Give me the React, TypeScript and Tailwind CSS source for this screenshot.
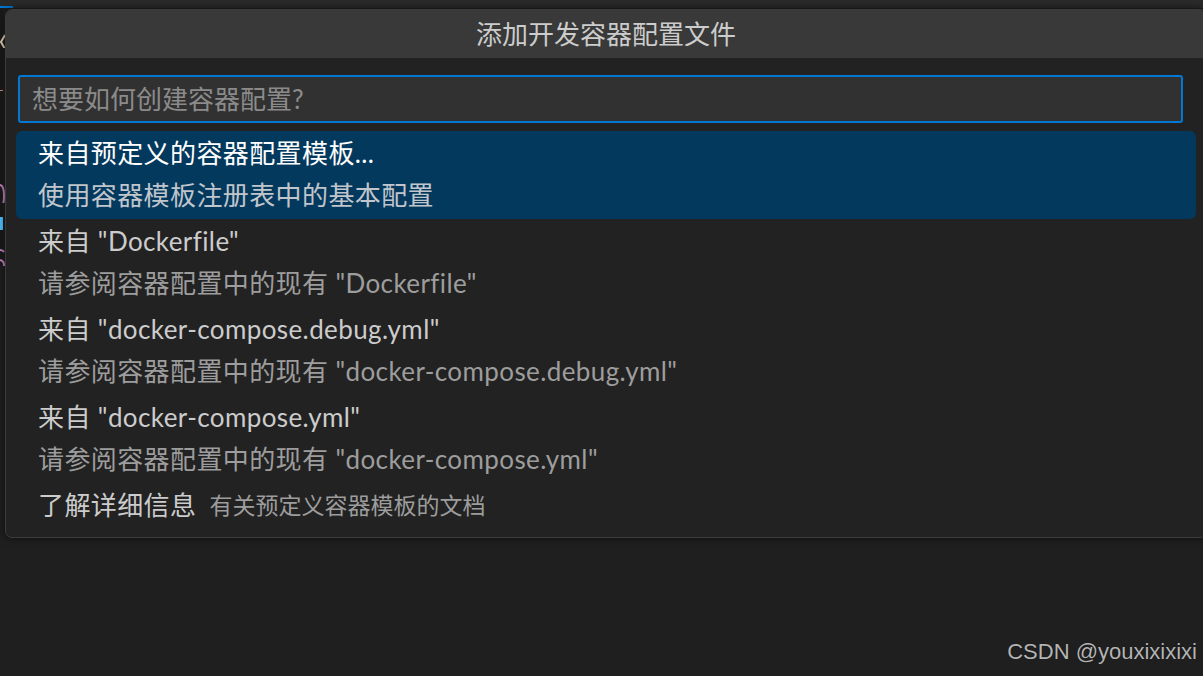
import React from 'react'

type Pick = {
  label: string
  detail?: string
  inline?: string
  active?: boolean
}

const items: Pick[] = [
  { label: '来自预定义的容器配置模板...', detail: '使用容器模板注册表中的基本配置', active: true },
  { label: '来自 "Dockerfile"', detail: '请参阅容器配置中的现有 "Dockerfile"' },
  { label: '来自 "docker-compose.debug.yml"', detail: '请参阅容器配置中的现有 "docker-compose.debug.yml"' },
  { label: '来自 "docker-compose.yml"', detail: '请参阅容器配置中的现有 "docker-compose.yml"' },
  { label: '了解详细信息', inline: '有关预定义容器模板的文档' },
]

const font = { fontFamily: 'Lato, "Noto Sans CJK SC", sans-serif', fontVariantLigatures: 'none' as const }

function EditorBehind() {
  // only a few pixels of the editor's code peek out from behind the quick pick
  return (
    <div className="flex flex-col w-full h-full">
      <div className="h-[8px] bg-[#2a2a2a] flex items-end">
        <div className="w-[13px] h-[2px] bg-[#0078d4]" />
      </div>
      <div className="flex-1 flex">
        <div className="w-[3px] h-[258px] bg-[#1a1a1a] flex flex-col">
          <svg width="5" height="20" className="mt-[24px]">
            <path d="M5 3 L1 10 L5 17" stroke="#e0d2b4" strokeWidth="2" fill="none" />
          </svg>
          <div className="mt-[42px] w-[3px] h-[2px] bg-[#ce9178]" />
          <svg width="5" height="26" className="mt-[92px]">
            <path d="M0 2 Q4 2 4 13 Q4 24 0 24" stroke="#c586c0" strokeWidth="2" fill="none" />
          </svg>
          <div className="mt-[14px] w-[3px] h-[16px] bg-[#4fc1ff]" />
          <svg width="5" height="26" className="mt-[16px]">
            <path d="M0 4 Q3 4 4 6 M0 14 Q4 15 4 19 Q4 23 0 23" stroke="#c586c0" strokeWidth="2" fill="none" />
          </svg>
        </div>
      </div>
    </div>
  )
}

function PickRow({ item }: { item: Pick }) {
  return (
    <div className={`mx-[10px] pl-[22px] rounded-[6px] tracking-[0.4px] ${item.active ? 'bg-[#04395e]' : ''}`}>
      <div className={`h-[44px] flex items-center text-[26px] whitespace-nowrap ${item.active ? 'text-white' : 'text-[#cccccc]'}`}>
        <span>{item.label}</span>
        {item.inline && <span className="ml-[13px] text-[23px] tracking-normal text-[#9d9d9d]">{item.inline}</span>}
      </div>
      {item.detail && (
        <div className={`h-[44px] pb-[3px] flex items-center text-[26px] whitespace-nowrap ${item.active ? 'text-[#c0c6cc]' : 'text-[#9d9d9d]'}`}>
          {item.detail}
        </div>
      )}
    </div>
  )
}

export default function App() {
  return (
    <div className="relative w-[1203px] h-[676px] overflow-hidden bg-[#1f1f1f]" style={font}>
      <EditorBehind />

      <div className="absolute left-[5px] top-[9px] w-[1202px] rounded-[7px] border border-[#3c3c3c] bg-[#222222] shadow-[0_0_8px_rgba(0,0,0,0.6)] overflow-hidden">
        <div className="h-[48px] bg-[#393939] flex items-center justify-center text-[26px] text-[#cccccc]">
          添加开发容器配置文件
        </div>

        <div className="pt-[17px] pl-[12px] pr-[23px]">
          <div className="h-[48px] rounded-[3px] border-2 border-[#0078d4] bg-[#313131] flex items-center pl-[12px] text-[26px] text-[#8b8b8b]">
            想要如何创建容器配置?
          </div>
        </div>

        <div className="pt-[8px] pb-[10px] flex flex-col">
          {items.map((item, i) => (
            <PickRow key={i} item={item} />
          ))}
        </div>
      </div>

      <div
        className="absolute right-[6px] bottom-[8px] text-[22px] text-[#b4b4b4]"
        style={{ fontFamily: '"Liberation Sans", Arial, sans-serif', textShadow: '0 0 1px rgba(0,0,0,0.6)' }}
      >
        CSDN @youxixixixi
      </div>
    </div>
  )
}
